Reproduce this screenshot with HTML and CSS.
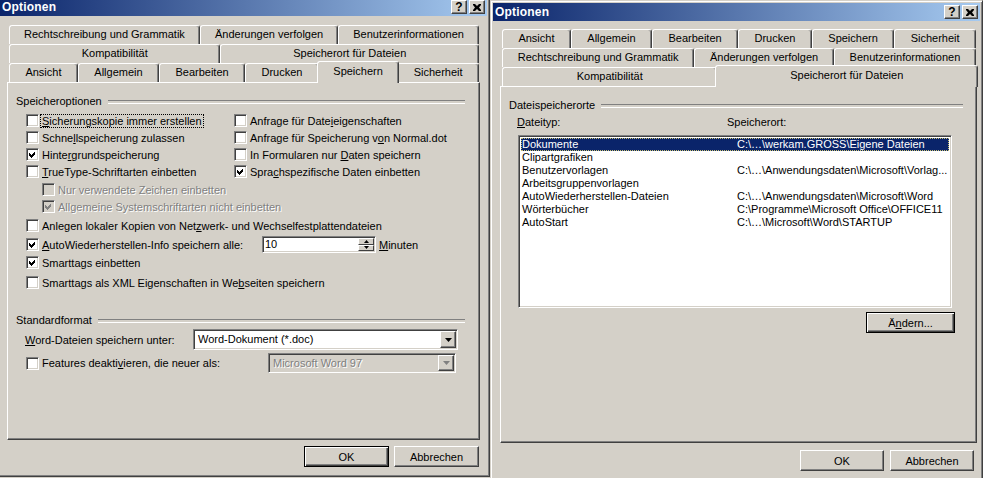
FILE: index.html
```html
<!DOCTYPE html>
<html lang="de">
  <head>
    <meta charset="UTF-8" />
    <title>Optionen</title>
    <link rel="stylesheet" href="styles.css">
  </head>
  <body>
    <div class="desk">
      <!-- Dialog 1: Register Speichern -->
      <section class="dialog dialog-left">
        <div class="titlebar">
          <span class="title">Optionen</span>
          <div class="caption-btns">
            <span class="cap-btn cap-help">?</span>
            <span class="cap-btn"><svg width="8" height="7" viewBox="0 0 8 7"><path d="M0 0h2l2 2 2-2h2v1l-2 2.5 2 2.5v1h-2l-2-2-2 2h-2v-1l2-2.5-2-2.5z"/></svg></span>
          </div>
        </div>
        <div class="content">
          <div class="tabs">
            <div class="tab-row">
              <div class="tab">Rechtschreibung und Grammatik</div>
              <div class="tab">Änderungen verfolgen</div>
              <div class="tab">Benutzerinformationen</div>
            </div>
            <div class="tab-row">
              <div class="tab">Kompatibilität</div>
              <div class="tab">Speicherort für Dateien</div>
            </div>
            <div class="tab-row">
              <div class="tab">Ansicht</div>
              <div class="tab">Allgemein</div>
              <div class="tab">Bearbeiten</div>
              <div class="tab">Drucken</div>
              <div class="tab active">Speichern</div>
              <div class="tab">Sicherheit</div>
            </div>
          </div>

          <div class="panel panel-left">
            <div class="group-title">Speicheroptionen</div>
            <div class="opts">
              <div class="opt-grid">
                <div class="opt"><span class="cb"></span><span class="focus"><u>S</u>icherungskopie immer erstellen</span></div>
                <div class="opt"><span class="cb"></span><span>Anfrage für Date<u>i</u>eigenschaften</span></div>
                <div class="opt"><span class="cb"></span><span>Schne<u>l</u>lspeicherung zulassen</span></div>
                <div class="opt"><span class="cb"></span><span>Anfrage für Speicherung v<u>o</u>n Normal.dot</span></div>
                <div class="opt"><span class="cb"><svg class="tick" viewBox="0 0 11 11"><path d="M2 4l2 2 4-4v3l-4 4-2-2z"/></svg></span><span>Hinte<u>r</u>grundspeicherung</span></div>
                <div class="opt"><span class="cb"></span><span>In Formularen nur <u>D</u>aten speichern</span></div>
                <div class="opt"><span class="cb"></span><span><u>T</u>rueType-Schriftarten einbetten</span></div>
                <div class="opt"><span class="cb"><svg class="tick" viewBox="0 0 11 11"><path d="M2 4l2 2 4-4v3l-4 4-2-2z"/></svg></span><span>Spra<u>c</u>hspezifische Daten einbetten</span></div>
              </div>
              <div class="sub-opts">
                <div class="opt disabled"><span class="cb"></span><span>Nur verwendete Zeichen einbetten</span></div>
                <div class="opt disabled"><span class="cb"><svg class="tick" viewBox="0 0 11 11"><path d="M2 4l2 2 4-4v3l-4 4-2-2z"/></svg></span><span>Allgemeine Systemschriftarten nicht einbetten</span></div>
              </div>
              <div class="opt opt-gap2"><span class="cb"></span><span>Anlegen lokaler Kopien von Net<u>z</u>werk- und Wechselfestplattendateien</span></div>
              <div class="opt opt-spin">
                <span class="cb"><svg class="tick" viewBox="0 0 11 11"><path d="M2 4l2 2 4-4v3l-4 4-2-2z"/></svg></span>
                <span class="spin-label"><u>A</u>utoWiederherstellen-Info speichern alle:</span>
                <div class="spin">
                  <span class="spin-text">10</span>
                  <div class="spin-btns">
                    <span class="mini-btn"><svg width="5" height="3" viewBox="0 0 5 3"><path d="M2.5 0L5 3H0z"/></svg></span>
                    <span class="mini-btn"><svg width="5" height="3" viewBox="0 0 5 3"><path d="M0 0h5L2.5 3z"/></svg></span>
                  </div>
                </div>
                <span class="unit"><u>M</u>inuten</span>
              </div>
              <div class="opt"><span class="cb"><svg class="tick" viewBox="0 0 11 11"><path d="M2 4l2 2 4-4v3l-4 4-2-2z"/></svg></span><span>Smartta<u>g</u>s einbetten</span></div>
              <div class="opt opt-gap3"><span class="cb"></span><span>Smarttags als XML Eigenschaften in We<u>b</u>seiten speichern</span></div>
            </div>

            <div class="group-title group-std">Standardformat</div>
            <div class="form-row row-word">
              <span class="word-label"><u>W</u>ord-Dateien speichern unter:</span>
              <div class="combo combo-word">
                <span class="combo-text">Word-Dokument (*.doc)</span>
                <span class="drop-btn"><svg width="7" height="4" viewBox="0 0 7 4"><path d="M0 0h7L3.5 4z"/></svg></span>
              </div>
            </div>
            <div class="form-row row-features">
              <div class="opt features-opt"><span class="cb"></span><span>Features deakti<u>v</u>ieren, die neuer als:</span></div>
              <div class="combo combo-off">
                <span class="combo-text">Microsoft Word 97</span>
                <span class="drop-btn"><svg width="7" height="4" viewBox="0 0 7 4"><path d="M0 0h7L3.5 4z"/></svg></span>
              </div>
            </div>
          </div>

          <div class="actions">
            <span class="btn default">OK</span>
            <span class="btn">Abbrechen</span>
          </div>
        </div>
      </section>

      <!-- Dialog 2: Register Speicherort für Dateien -->
      <section class="dialog dialog-right">
        <div class="titlebar">
          <span class="title">Optionen</span>
          <div class="caption-btns">
            <span class="cap-btn cap-help">?</span>
            <span class="cap-btn"><svg width="8" height="7" viewBox="0 0 8 7"><path d="M0 0h2l2 2 2-2h2v1l-2 2.5 2 2.5v1h-2l-2-2-2 2h-2v-1l2-2.5-2-2.5z"/></svg></span>
          </div>
        </div>
        <div class="content">
          <div class="tabs">
            <div class="tab-row">
              <div class="tab">Ansicht</div>
              <div class="tab">Allgemein</div>
              <div class="tab">Bearbeiten</div>
              <div class="tab">Drucken</div>
              <div class="tab">Speichern</div>
              <div class="tab">Sicherheit</div>
            </div>
            <div class="tab-row">
              <div class="tab">Rechtschreibung und Grammatik</div>
              <div class="tab">Änderungen verfolgen</div>
              <div class="tab">Benutzerinformationen</div>
            </div>
            <div class="tab-row">
              <div class="tab">Kompatibilität</div>
              <div class="tab active">Speicherort für Dateien</div>
            </div>
          </div>

          <div class="panel panel-right">
            <div class="group-title">Dateispeicherorte</div>
            <div class="list-head">
              <span><u>D</u>ateityp:</span>
              <span>Speicherort:</span>
            </div>
            <div class="listbox">
              <div class="lb-row selected"><span>Dokumente</span><span>C:\…\werkam.GROSS\Eigene Dateien</span></div>
              <div class="lb-row"><span>Clipartgrafiken</span><span></span></div>
              <div class="lb-row"><span>Benutzervorlagen</span><span>C:\…\Anwendungsdaten\Microsoft\Vorlag...</span></div>
              <div class="lb-row"><span>Arbeitsgruppenvorlagen</span><span></span></div>
              <div class="lb-row"><span>AutoWiederherstellen-Dateien</span><span>C:\…\Anwendungsdaten\Microsoft\Word</span></div>
              <div class="lb-row"><span>Wörterbücher</span><span>C:\Programme\Microsoft Office\OFFICE11</span></div>
              <div class="lb-row"><span>AutoStart</span><span>C:\…\Microsoft\Word\STARTUP</span></div>
            </div>
            <div class="change-row">
              <span class="btn default btn-change">Ä<u>n</u>dern...</span>
            </div>
          </div>

          <div class="actions actions-right">
            <span class="btn">OK</span>
            <span class="btn">Abbrechen</span>
          </div>
        </div>
      </section>
    </div>
  </body>
</html>
```

FILE: styles.css
```css
* {
  box-sizing: border-box;
}
:root {
  --face: #d4d0c8;
  --shadow: #808080;
  --dark: #404040;
}
body {
  margin: 0;
  background: var(--face);
  font: 11px "Liberation Sans", Arial, sans-serif;
  color: #000;
  overflow: hidden;
}
u {
  text-decoration: underline;
  text-underline-offset: 1px;
}
.desk {
  display: flex;
  height: 478px;
  overflow: hidden;
}

/* --------------- window frame */
.dialog {
  flex: none;
  width: 493px;
  display: flex;
  flex-direction: column;
  background: var(--face);
  border: 1px solid;
  border-color: var(--face) var(--dark) var(--dark) var(--face);
  box-shadow: inset 1px 1px #fff, inset -1px -1px var(--shadow);
  padding: 2px;
}
.dialog-left {
  height: 482px;
  margin: -5px 0 0 -3px;
}
.dialog-right {
  height: 500px;
}
.titlebar {
  height: 18px;
  display: flex;
  align-items: center;
  justify-content: space-between;
  padding: 0 2px 0 2px;
  background: linear-gradient(to right, #0a246a, #a6caf0);
}
.title {
  color: #fff;
  font-weight: bold;
  font-size: 12px;
  letter-spacing: 0.2px;
}
.caption-btns {
  display: flex;
  gap: 2px;
}
.cap-btn {
  width: 16px;
  height: 14px;
  display: flex;
  align-items: center;
  justify-content: center;
  background: var(--face);
  border: 1px solid;
  border-color: #fff var(--dark) var(--dark) #fff;
  box-shadow: inset -1px -1px var(--shadow);
  font-weight: bold;
  font-size: 12px;
  line-height: 12px;
}
.content {
  flex: 1;
  display: flex;
  flex-direction: column;
  padding: 0 7px;
}
.dialog-right .content {
  padding-right: 3px;
}

/* --------------- tabs */
.tabs {
  margin: 9px 1px 0 2px;
}
.dialog-right .tabs {
  margin-top: 8px;
}
.tab-row {
  display: flex;
  height: 19px;
}
.tab {
  flex: 1 1 auto;
  height: 19px;
  padding: 0 12px;
  border: 1px solid;
  border-bottom: 0;
  border-color: #fff var(--dark) transparent #fff;
  border-radius: 3px 3px 0 0;
  box-shadow: inset -1px 0 var(--shadow);
  background: var(--face);
  text-align: center;
  line-height: 17px;
  white-space: nowrap;
}
.tab.active {
  position: relative;
  z-index: 1;
  height: 22px;
  margin: -2px -2px -1px;
  line-height: 18px;
}

/* --------------- panel */
.panel {
  display: flex;
  flex-direction: column;
  border: 1px solid;
  border-color: #fff var(--dark) var(--dark) #fff;
  box-shadow: inset -1px -1px var(--shadow);
}
.panel-left {
  height: 358px;
  padding: 12px 14px 0 8px;
}
.panel-right {
  height: 357px;
  padding: 12px 13px 0 8px;
}
.group-title {
  display: flex;
  align-items: center;
  gap: 6px;
  height: 13px;
  line-height: 13px;
  white-space: nowrap;
}
.group-title::after {
  content: "";
  flex: 1;
  height: 2px;
  border-top: 1px solid var(--shadow);
  border-bottom: 1px solid #fff;
}
.group-std {
  margin-top: 23px;
}

/* --------------- checkboxes */
.opts {
  margin: 4px 0 0 10px;
}
.opt-grid {
  display: grid;
  grid-template-columns: 208px auto;
}
.opt {
  display: flex;
  align-items: center;
  gap: 3px;
  height: 17px;
  white-space: nowrap;
}
.cb {
  flex: none;
  width: 13px;
  height: 13px;
  background: #fff;
  border: 1px solid;
  border-color: var(--shadow) #fff #fff var(--shadow);
  box-shadow: inset 1px 1px var(--dark), inset -1px -1px var(--face);
}
.tick {
  display: block;
  width: 11px;
  height: 11px;
  shape-rendering: crispEdges;
}
.focus {
  outline: 1px dotted #000;
  padding: 0 1px;
  margin-left: -1px;
}
.sub-opts {
  margin: 1px 0 0 16px;
}
.opt.disabled {
  color: var(--shadow);
  text-shadow: 1px 1px #fff;
}
.opt.disabled .cb {
  background: var(--face);
}
.opt.disabled .tick {
  fill: var(--shadow);
}
.opt-gap2 {
  margin-top: 2px;
}
.opt-gap3 {
  margin-top: 3px;
}
.opt-spin {
  height: 19px;
  margin-top: 1px;
}
.spin-label {
  width: 217px;
}
.spin {
  display: flex;
  width: 114px;
  height: 17px;
  background: #fff;
  border: 1px solid;
  border-color: var(--shadow) #fff #fff var(--shadow);
  box-shadow: inset 1px 1px var(--dark), inset -1px -1px var(--face);
  padding: 1px;
}
.spin-text {
  flex: 1;
  line-height: 13px;
  padding-left: 1px;
}
.spin-btns {
  display: flex;
  flex-direction: column;
  width: 16px;
}
.mini-btn {
  flex: 1;
  display: flex;
  align-items: center;
  justify-content: center;
  background: var(--face);
  border: 1px solid;
  border-color: #fff var(--dark) var(--dark) #fff;
}

/* --------------- combos */
.form-row {
  display: flex;
  align-items: center;
}
.row-word {
  height: 21px;
  margin: 2px 0 0 9px;
}
.word-label {
  width: 168px;
}
.row-features {
  height: 20px;
  margin: 3px 0 0 10px;
}
.features-opt {
  width: 242px;
}
.combo {
  display: flex;
  align-items: stretch;
  height: 21px;
  width: 265px;
  background: #fff;
  border: 1px solid;
  border-color: var(--shadow) #fff #fff var(--shadow);
  box-shadow: inset 1px 1px var(--dark), inset -1px -1px var(--face);
  padding: 1px;
}
.combo-text {
  flex: 1;
  padding-left: 3px;
  line-height: 17px;
}
.drop-btn {
  width: 16px;
  display: flex;
  align-items: center;
  justify-content: center;
  background: var(--face);
  border: 1px solid;
  border-color: #fff var(--dark) var(--dark) #fff;
  box-shadow: inset -1px -1px var(--shadow);
}
.combo-off {
  width: 188px;
  height: 20px;
  background: var(--face);
  color: var(--shadow);
  text-shadow: 1px 1px #fff;
}
.combo-off .combo-text {
  line-height: 16px;
}
.combo-off .drop-btn {
  fill: var(--shadow);
}

/* --------------- list */
.list-head {
  display: grid;
  grid-template-columns: 210px auto;
  margin: 4px 0 0 8px;
  line-height: 13px;
}
.listbox {
  height: 173px;
  margin: 6px 11px 0 9px;
  background: #fff;
  border: 1px solid;
  border-color: var(--shadow) #fff #fff var(--shadow);
  box-shadow: inset 1px 1px var(--dark), inset -1px -1px var(--face);
  padding: 2px;
}
.lb-row {
  display: grid;
  grid-template-columns: 215px 1fr;
  height: 13px;
  line-height: 13px;
  padding-left: 1px;
  white-space: nowrap;
}
.lb-row.selected {
  background: #0a246a;
  color: #fff;
  outline: 1px dotted #c8c070;
  outline-offset: -1px;
}
.change-row {
  display: flex;
  justify-content: flex-end;
  margin: 4px 8px 0 0;
}

/* --------------- buttons */
.actions {
  display: flex;
  justify-content: flex-end;
  gap: 5px;
  margin: 6px 1px 0 0;
}
.actions-right {
  margin: 7px 3px 0 0;
  gap: 6px;
}
.btn {
  width: 85px;
  height: 21px;
  display: flex;
  align-items: center;
  justify-content: center;
  background: var(--face);
  border: 1px solid;
  border-color: #fff var(--dark) var(--dark) #fff;
  box-shadow: inset -1px -1px var(--shadow);
}
.actions-right .btn {
  width: 84px;
}
.btn.default {
  border-color: #000;
  box-shadow: inset 1px 1px #fff, inset -1px -1px var(--dark), inset -2px -2px var(--shadow);
}
.btn-change {
  width: 89px;
}
```
